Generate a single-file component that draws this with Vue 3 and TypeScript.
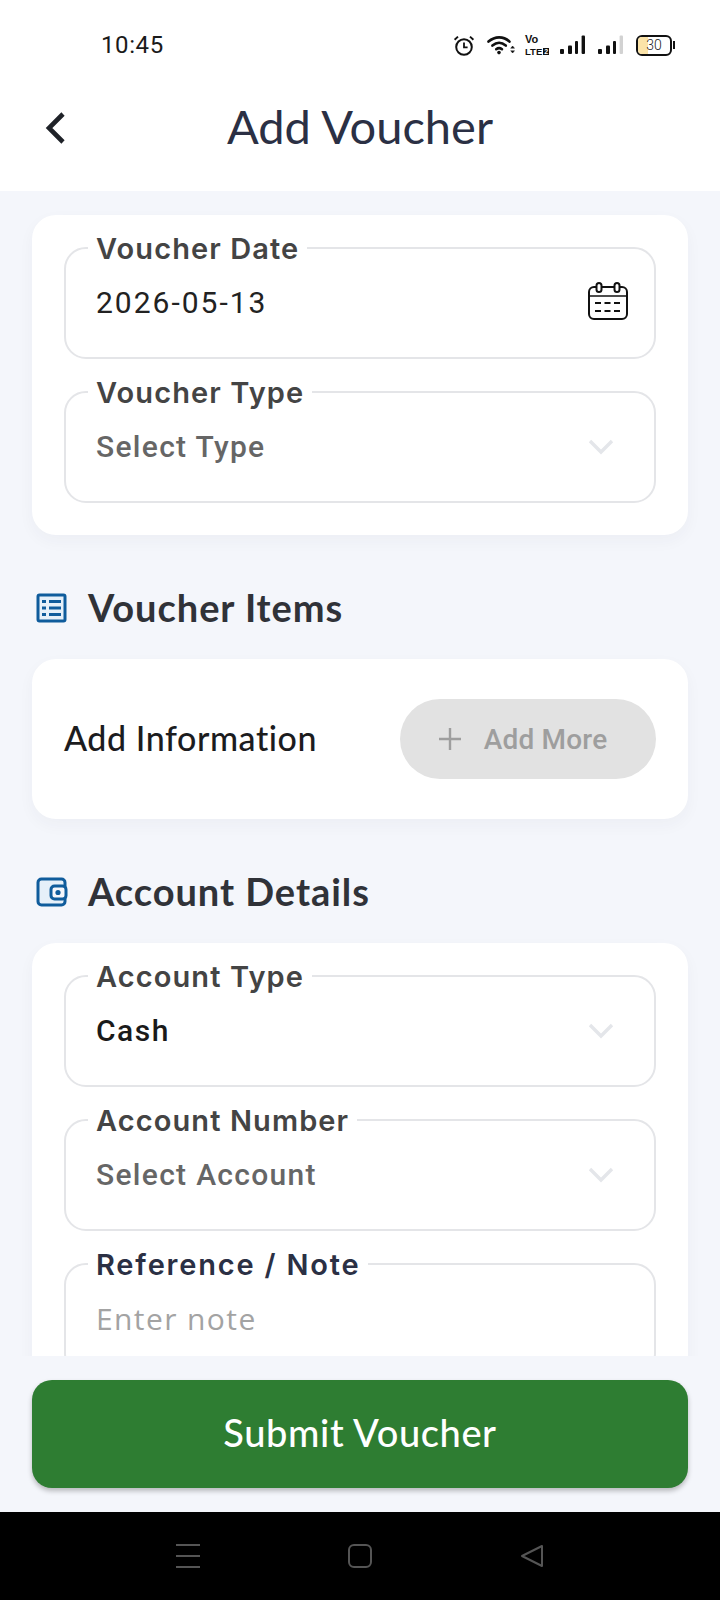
<template>
  <div class="screen">
    <!-- Status bar and title -->
    <header class="top">
      <div class="status">
        <span class="time">10:45</span>
        <div class="status-icons">
          <svg width="22" height="21" viewBox="0 0 22 21" fill="none" stroke="#111" stroke-width="2">
            <circle cx="11" cy="12" r="7.8" />
            <path d="M11 7.6V12.4H14.6" stroke-width="1.8" />
            <path d="M1.6 4.8 5 1.6M20.4 4.8 17 1.6" stroke-width="1.9" />
          </svg>
          <svg width="28" height="20" viewBox="0 0 28 20" fill="none" stroke="#111" stroke-width="2.6" stroke-linecap="round">
            <path d="M1.5 6.6C8 1 16.4 1 22.5 6.6" />
            <path d="M5.4 10.6C9.6 7 14.6 7 18.8 10.6" />
            <path d="M9.2 14.2C11.2 12.6 13 12.6 15 14.2" />
            <circle cx="12" cy="17.6" r="1.8" fill="#111" stroke="none" />
            <path d="M24 13 25.6 11 27.2 13ZM24 16 25.6 18 27.2 16Z" fill="#111" stroke-width="0.6" />
          </svg>
          <div class="volte">
            <span class="vo">Vo</span>
            <span class="lte">LTE<i>2</i></span>
          </div>
          <svg width="26" height="20" viewBox="0 0 26 20" fill="#111">
            <rect x="0" y="14" width="4" height="5" rx="1" />
            <rect x="8" y="10.5" width="4" height="8.5" rx="1" />
            <rect x="15" y="6" width="3" height="13" rx="1" />
            <rect x="21.6" y="0.5" width="3.4" height="18.5" rx="1" />
          </svg>
          <svg width="26" height="20" viewBox="0 0 26 20" fill="#111">
            <rect x="0" y="14" width="4" height="5" rx="1" />
            <rect x="8" y="10.5" width="4" height="8.5" rx="1" />
            <rect x="15" y="6" width="3" height="13" rx="1" />
            <rect x="21.6" y="0.5" width="3.4" height="18.5" rx="1" fill="#d2d2d2" />
          </svg>
          <div class="battery">
            <div class="battery-body">
              <div class="battery-fill" :style="{ width: batteryLevel + '%' }" />
              <span>{{ batteryLevel }}</span>
            </div>
            <div class="battery-cap" />
          </div>
        </div>
      </div>
      <div class="titlebar">
        <button class="back">
          <svg width="24" height="34" viewBox="0 0 24 34" fill="none" stroke="#1f2228" stroke-width="4.6">
            <path d="M20 3 6 17 20 31" />
          </svg>
        </button>
        <h1>Add Voucher</h1>
      </div>
    </header>

    <main class="content">
      <section class="card fields">
        <div v-for="field in voucherFields" :key="field.label" class="field">
          <label>{{ field.label }}</label>
          <span class="value" :class="field.kind">{{ field.value }}</span>
          <svg v-if="field.icon === 'date'" class="calendar" width="40" height="38" viewBox="0 0 40 38" fill="none" stroke="#111" stroke-width="2">
            <rect x="1" y="5" width="38" height="32" rx="5" />
            <path d="M1 14H39" stroke-width="1.6" />
            <rect x="8.5" y="1" width="5" height="9" rx="2.5" fill="#fff" />
            <rect x="26.5" y="1" width="5" height="9" rx="2.5" fill="#fff" />
            <path d="M7 21H33M7 29H33" stroke-dasharray="6 3.5" />
          </svg>
          <svg v-else-if="field.icon === 'chevron'" class="chevron" width="26" height="16" viewBox="0 0 26 16" fill="none" stroke="#e4e6ea" stroke-width="3.4">
            <path d="M2 2 13 13 24 2" />
          </svg>
        </div>
      </section>

      <div class="section-title">
        <svg width="32" height="30" viewBox="0 0 32 30" fill="none">
          <rect x="2" y="2" width="27" height="26" rx="1.5" fill="#e6f0f9" stroke="#0f5c9c" stroke-width="3" />
          <path d="M6 8.5H10M13 8.5H25M6 15H10M13 15H25M6 21.5H10M13 21.5H25" stroke="#0f5c9c" stroke-width="3" />
        </svg>
        <h2>Voucher Items</h2>
      </div>

      <section class="card info">
        <span class="info-label">Add Information</span>
        <button class="add-more">
          <svg width="22" height="22" viewBox="0 0 22 22" stroke="#9e9e9e" stroke-width="2.4">
            <path d="M11 0V22M0 11H22" />
          </svg>
          <span>Add More</span>
        </button>
      </section>

      <div class="section-title">
        <svg width="32" height="30" viewBox="0 0 32 30" fill="none">
          <rect x="2" y="2" width="27" height="26" rx="3.5" fill="#e6f0f9" stroke="#0f5c9c" stroke-width="3" />
          <rect x="15" y="9" width="15" height="13" rx="3.5" fill="#f4f6fb" stroke="#0f5c9c" stroke-width="3" />
          <circle cx="22" cy="15.5" r="2.6" fill="#0f5c9c" />
        </svg>
        <h2>Account Details</h2>
      </div>

      <section class="card fields">
        <div v-for="field in accountFields" :key="field.label" class="field">
          <label :class="{ note: field.kind === 'hint' }">{{ field.label }}</label>
          <span class="value" :class="field.kind">{{ field.value }}</span>
          <svg v-if="field.icon === 'chevron'" class="chevron" width="26" height="16" viewBox="0 0 26 16" fill="none" stroke="#e4e6ea" stroke-width="3.4">
            <path d="M2 2 13 13 24 2" />
          </svg>
        </div>
      </section>
    </main>

    <footer class="actions">
      <button class="submit">Submit Voucher</button>
    </footer>

    <nav class="android-nav">
      <svg width="24" height="24" viewBox="0 0 24 24" stroke="#555" stroke-width="2">
        <path d="M0 1H24M0 12H24M0 23H24" />
      </svg>
      <svg width="24" height="24" viewBox="0 0 24 24" fill="none" stroke="#555" stroke-width="2">
        <rect x="1" y="1" width="22" height="22" rx="5" />
      </svg>
      <svg width="24" height="24" viewBox="0 0 24 24" fill="none" stroke="#555" stroke-width="2" stroke-linejoin="round">
        <path d="M22 2V22L2 12Z" />
      </svg>
    </nav>
  </div>
</template>

<script setup lang="ts">
interface Field {
  label: string;
  value: string;
  kind: 'filled' | 'placeholder' | 'strong' | 'hint';
  icon?: 'date' | 'chevron';
}

const batteryLevel = 30;

const voucherFields: Field[] = [
  { label: 'Voucher Date', value: '2026-05-13', kind: 'filled', icon: 'date' },
  { label: 'Voucher Type', value: 'Select Type', kind: 'placeholder', icon: 'chevron' },
];

const accountFields: Field[] = [
  { label: 'Account Type', value: 'Cash', kind: 'strong', icon: 'chevron' },
  { label: 'Account Number', value: 'Select Account', kind: 'placeholder', icon: 'chevron' },
  { label: 'Reference / Note', value: 'Enter note', kind: 'hint' },
];
</script>

<style>
html,
body {
  margin: 0;
  background: #000;
}
</style>

<style scoped>
.screen {
  width: 720px;
  height: 1600px;
  display: flex;
  flex-direction: column;
  overflow: hidden;
  background: #f4f6fb;
  font-family: Roboto, "Liberation Sans", sans-serif;
}

.top {
  height: 191px;
  flex-shrink: 0;
  background: #fff;
}

.status {
  height: 90px;
  padding: 0 45px 0 101px;
  display: flex;
  align-items: center;
  justify-content: space-between;
  box-sizing: border-box;
}

.time {
  font-size: 24px;
  color: #1a1a1a;
  letter-spacing: 0.6px;
}

.status-icons {
  display: flex;
  align-items: center;
  gap: 12px;
}

.volte {
  width: 24px;
  margin: 0 -1px 0 -2px;
  display: flex;
  flex-direction: column;
  font-family: "Liberation Sans Narrow", "Liberation Sans", sans-serif;
  font-weight: 700;
  color: #111;
}

.vo {
  font-size: 11px;
  line-height: 13px;
}

.lte {
  font-size: 9.5px;
  line-height: 11px;
  white-space: nowrap;
}

.lte i {
  font-style: normal;
  font-size: 7px;
  margin-left: 1px;
  padding: 0 1px;
  background: #111;
  color: #fff;
  vertical-align: 1px;
}

.battery {
  display: flex;
  align-items: center;
  gap: 1px;
}

.battery-body {
  position: relative;
  width: 32px;
  height: 17px;
  border: 2px solid #111;
  border-radius: 6px;
  overflow: hidden;
  display: flex;
  align-items: center;
  justify-content: center;
}

.battery-fill {
  position: absolute;
  left: 0;
  top: 0;
  bottom: 0;
  background: #fbe3a8;
}

.battery-body span {
  position: relative;
  font-size: 14px;
  font-weight: 300;
  color: #222;
}

.battery-cap {
  width: 2px;
  height: 8px;
  background: #111;
}

.titlebar {
  position: relative;
  height: 76px;
  display: flex;
  align-items: center;
  justify-content: center;
  padding-bottom: 4px;
  box-sizing: border-box;
}

h1 {
  margin: 0;
  font-family: Lato, sans-serif;
  font-weight: 400;
  font-size: 47px;
  color: #2b3044;
}

.back {
  position: absolute;
  left: 43px;
  top: 21px;
  padding: 0;
  border: 0;
  background: none;
  line-height: 0;
}

.content {
  flex: 1;
  min-height: 0;
  overflow: hidden;
  padding: 24px 32px 0;
}

.card {
  background: #fff;
  border-radius: 24px;
  box-shadow: 0 6px 16px rgba(40, 50, 80, 0.04);
}

.fields {
  padding: 32px;
  display: flex;
  flex-direction: column;
  gap: 32px;
}

.field {
  position: relative;
  height: 112px;
  flex-shrink: 0;
  box-sizing: border-box;
  border: 2px solid #e4e5e8;
  border-radius: 22px;
  padding: 36px 26px 0 30px;
  display: flex;
  align-items: flex-start;
  justify-content: space-between;
}

.field label {
  position: absolute;
  left: 22px;
  top: -17px;
  padding: 0 8px;
  background: #fff;
  font-family: Inter, sans-serif;
  font-weight: 600;
  font-size: 29px;
  line-height: 34px;
  letter-spacing: 1.1px;
  color: #444;
}

.field label.note {
  letter-spacing: 1.8px;
  color: #2b3044;
}

.value {
  font-size: 30px;
  line-height: 36px;
  font-variant-ligatures: none;
}

.value.filled {
  color: #222;
  letter-spacing: 2px;
}

.value.placeholder {
  color: #666;
  font-weight: 500;
  letter-spacing: 1.3px;
}

.value.strong {
  color: #1a1a1a;
  font-weight: 500;
  letter-spacing: 1.5px;
}

.value.hint {
  font-family: "Open Sans", sans-serif;
  color: #a3a3a3;
  letter-spacing: 1.4px;
}

.calendar {
  margin: -3px 0 0;
}

.chevron {
  margin: 10px 14px 0 0;
}

.section-title {
  height: 60px;
  margin: 43px 0 21px;
  display: flex;
  align-items: center;
  gap: 20px;
  padding-left: 4px;
}

h2 {
  margin: 0;
  padding-bottom: 2px;
  font-family: Lato, sans-serif;
  font-weight: 700;
  font-size: 38px;
  letter-spacing: 0.95px;
  color: #303238;
}

.info {
  height: 160px;
  padding: 0 32px;
  box-sizing: border-box;
  display: flex;
  align-items: center;
  justify-content: space-between;
}

.info-label {
  padding-bottom: 3px;
  font-family: Lato, sans-serif;
  font-size: 34px;
  font-weight: 500;
  letter-spacing: 0.55px;
  font-variant-ligatures: none;
  color: #1c1c1e;
}

.add-more {
  width: 256px;
  height: 80px;
  border: 0;
  border-radius: 40px;
  padding: 0 10px 0 0;
  background: #e2e2e2;
  display: flex;
  align-items: center;
  justify-content: center;
  gap: 23px;
  font-family: Roboto, sans-serif;
  font-size: 28px;
  font-weight: 500;
  letter-spacing: 0.2px;
  color: #9e9e9e;
}

.actions {
  height: 156px;
  flex-shrink: 0;
  padding: 24px 32px;
  box-sizing: border-box;
}

.submit {
  width: 100%;
  height: 108px;
  border: 0;
  border-radius: 20px;
  padding: 0 0 4px;
  background: #2e7d32;
  box-shadow: 0 3px 5px rgba(0, 0, 0, 0.25);
  font-family: Lato, sans-serif;
  font-size: 38px;
  font-weight: 500;
  letter-spacing: 0.6px;
  color: #fff;
}

.android-nav {
  height: 88px;
  flex-shrink: 0;
  background: #000;
  display: flex;
  align-items: center;
  justify-content: center;
  gap: 148px;
}
</style>
